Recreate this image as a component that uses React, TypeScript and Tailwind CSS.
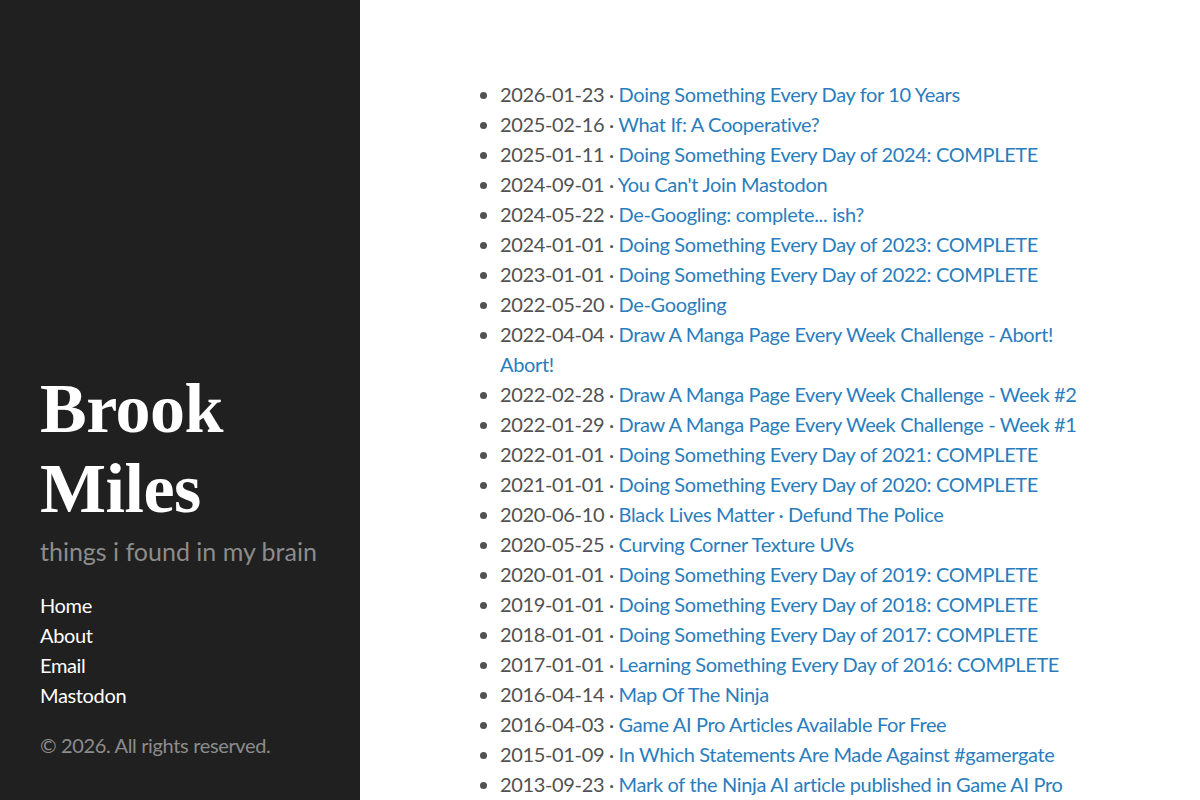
const posts: [string, string][] = [
  ["2026-01-23", "Doing Something Every Day for 10 Years"],
  ["2025-02-16", "What If: A Cooperative?"],
  ["2025-01-11", "Doing Something Every Day of 2024: COMPLETE"],
  ["2024-09-01", "You Can't Join Mastodon"],
  ["2024-05-22", "De-Googling: complete... ish?"],
  ["2024-01-01", "Doing Something Every Day of 2023: COMPLETE"],
  ["2023-01-01", "Doing Something Every Day of 2022: COMPLETE"],
  ["2022-05-20", "De-Googling"],
  ["2022-04-04", "Draw A Manga Page Every Week Challenge - Abort! Abort!"],
  ["2022-02-28", "Draw A Manga Page Every Week Challenge - Week #2"],
  ["2022-01-29", "Draw A Manga Page Every Week Challenge - Week #1"],
  ["2022-01-01", "Doing Something Every Day of 2021: COMPLETE"],
  ["2021-01-01", "Doing Something Every Day of 2020: COMPLETE"],
  ["2020-06-10", "Black Lives Matter · Defund The Police"],
  ["2020-05-25", "Curving Corner Texture UVs"],
  ["2020-01-01", "Doing Something Every Day of 2019: COMPLETE"],
  ["2019-01-01", "Doing Something Every Day of 2018: COMPLETE"],
  ["2018-01-01", "Doing Something Every Day of 2017: COMPLETE"],
  ["2017-01-01", "Learning Something Every Day of 2016: COMPLETE"],
  ["2016-04-14", "Map Of The Ninja"],
  ["2016-04-03", "Game AI Pro Articles Available For Free"],
  ["2015-01-09", "In Which Statements Are Made Against #gamergate"],
  ["2013-09-23", "Mark of the Ninja AI article published in Game AI Pro"],
  ["2013-06-03", "Rendering Text With OpenGL"],
];

export default function App() {
  return (
    <div className="flex h-[800px] overflow-hidden font-['Lato',sans-serif] text-[20px] leading-[30px] tracking-[-0.35px]">
      {/* sidebar, content pinned to the bottom */}
      <aside className="flex w-[360px] shrink-0 flex-col justify-end bg-[#202020] px-10 pb-10 text-[#8c8c8c]">
        <h1 className="font-['Liberation_Serif',serif] text-[70px] font-bold leading-[80px] tracking-[-0.5px] text-white">
          Brook Miles
        </h1>
        <p className="mt-[3px] text-[25px] leading-[38px] tracking-normal">things i found in my brain</p>
        <nav className="mt-5 flex flex-col">
          {["Home", "About", "Email", "Mastodon"].map((n) => (
            <a key={n} href="#" className="text-white">
              {n}
            </a>
          ))}
        </nav>
        <p className="mt-5">© 2026. All rights reserved.</p>
      </aside>

      <main className="flex-1 pl-[140px] pr-[110px] pt-[79px] text-[#515151]">
        <ul className="list-disc">
          {posts.map(([date, title]) => (
            <li key={date + title}>
              {date} · <a href="#" className="text-[#2a7dbd]">{title}</a>
            </li>
          ))}
        </ul>
      </main>
    </div>
  );
}
